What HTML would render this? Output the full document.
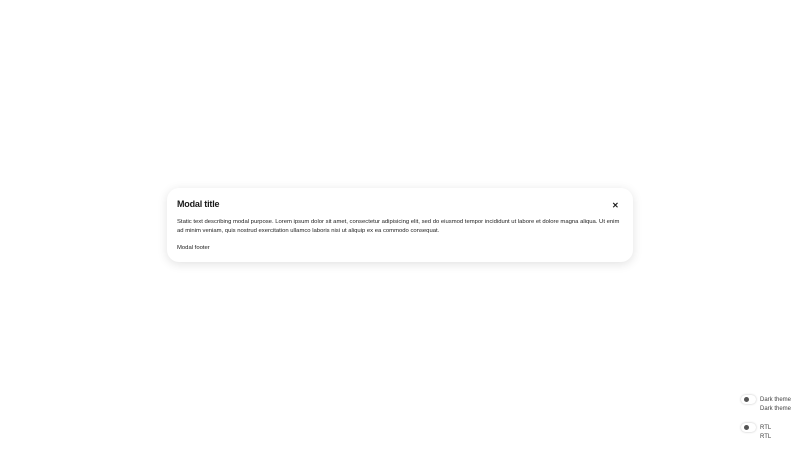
<!DOCTYPE html>
<html><head><style>
body{margin:0;width:800px;height:450px;background:#fff;font-family:"Liberation Sans",sans-serif;position:relative;overflow:hidden;color:#1a1a1a}
.modal{position:absolute;left:167px;top:188px;width:466px;height:74px;background:#fff;border-radius:12px;box-shadow:0 2px 10px rgba(0,0,0,.12)}
.t{position:absolute;left:10px;top:11px;font-size:9px;font-weight:bold;letter-spacing:-0.2px}
.x{position:absolute;left:445px;top:13px;font-size:8px;font-weight:bold}
.b{position:absolute;left:10px;top:30px;width:443px;font-size:5.9px;line-height:9px;color:#222}
.f{position:absolute;left:10px;top:57px;font-size:5.9px;color:#222}
.tg{position:absolute;left:741px;width:15px;height:9px;border-radius:5px;background:#fff;box-shadow:0 0 2px rgba(0,0,0,.25)}
.tg:after{content:"";position:absolute;left:3px;top:2px;width:5px;height:5px;border-radius:50%;background:#555}
.l{position:absolute;left:760px;font-size:6px;color:#444;line-height:8.5px}
</style></head><body>
<div class="modal">
<div class="t">Modal title</div>
<div class="x">✕</div>
<div class="b">Static text describing modal purpose. Lorem ipsum dolor sit amet, consectetur adipisicing elit, sed do eiusmod tempor incididunt ut labore et dolore magna aliqua. Ut enim ad minim veniam, quis nostrud exercitation ullamco laboris nisi ut aliquip ex ea commodo consequat.</div>
<div class="f">Modal footer</div>
</div>
<div class="tg" style="top:395px"></div>
<div class="l" style="top:396px">Dark theme<br>Dark theme</div>
<div class="tg" style="top:423px"></div>
<div class="l" style="top:424px">RTL<br>RTL</div>
</body></html>
